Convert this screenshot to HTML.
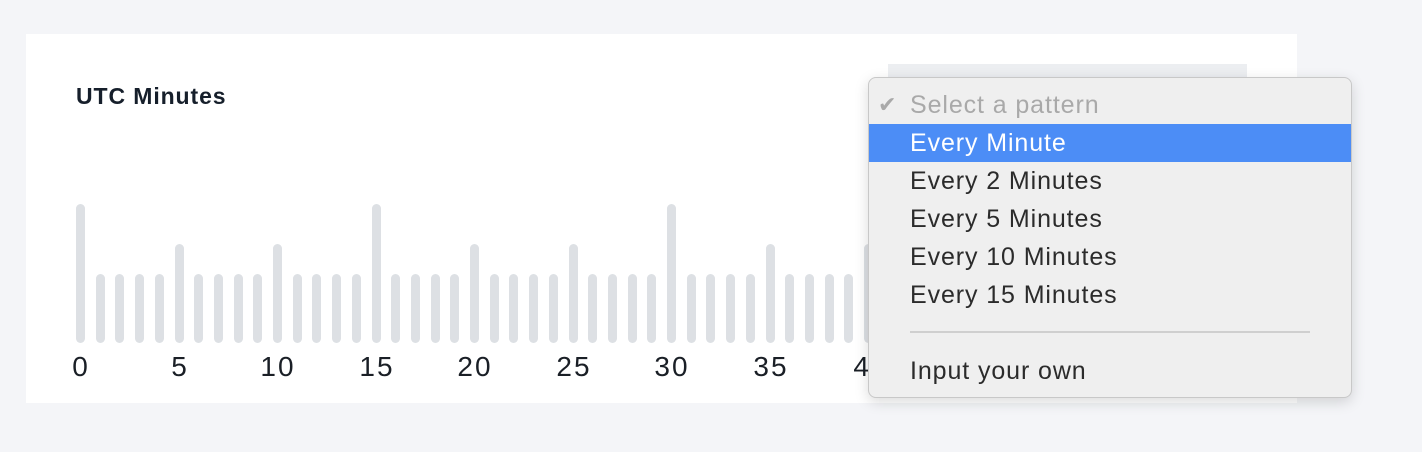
<!DOCTYPE html>
<html><head><meta charset="utf-8"><style>
*{margin:0;padding:0;box-sizing:border-box}
body{width:1422px;height:452px;background:#f4f5f8;position:relative;overflow:hidden;font-family:"Liberation Sans",sans-serif}
.card{position:absolute;left:26px;top:34px;width:1271px;height:369px;background:#fff}
.t{position:absolute;left:76px;top:83px;font-size:23px;font-weight:bold;color:#161f2b;letter-spacing:0.9px}
.b{position:absolute;width:9px;bottom:109px;background:#dde0e4;border-radius:5px}
.s{top:274px}.m{top:244px}.l{top:204px}
.lb{position:absolute;top:351px;font-size:28px;color:#1a1f26;width:60px;text-align:center;letter-spacing:2px;text-indent:2px}
.sel{position:absolute;left:888px;top:64px;width:359px;height:40px;background:#eceef1}
.dd{position:absolute;left:868px;top:77px;width:484px;height:321px;background:#efefef;border:1px solid #c8c8c8;border-radius:8px;box-shadow:0 4px 14px rgba(0,0,0,.15);font-size:25px;letter-spacing:0.9px;color:#2b2b2b}
.it{position:absolute;left:0;width:482px;height:38px;line-height:38px;padding-left:41px}
.hl{background:#4c8df6;color:#fff}
.dis{color:#a9a9a9}
.hr{position:absolute;left:41px;top:253px;width:400px;height:2px;background:#cfcfcf}
</style></head><body>
<div class="card"></div>
<div class="t">UTC Minutes</div>
<div class="b l" style="left:76px"></div>
<div class="b s" style="left:96px"></div>
<div class="b s" style="left:115px"></div>
<div class="b s" style="left:135px"></div>
<div class="b s" style="left:155px"></div>
<div class="b m" style="left:175px"></div>
<div class="b s" style="left:194px"></div>
<div class="b s" style="left:214px"></div>
<div class="b s" style="left:234px"></div>
<div class="b s" style="left:253px"></div>
<div class="b m" style="left:273px"></div>
<div class="b s" style="left:293px"></div>
<div class="b s" style="left:312px"></div>
<div class="b s" style="left:332px"></div>
<div class="b s" style="left:352px"></div>
<div class="b l" style="left:372px"></div>
<div class="b s" style="left:391px"></div>
<div class="b s" style="left:411px"></div>
<div class="b s" style="left:431px"></div>
<div class="b s" style="left:450px"></div>
<div class="b m" style="left:470px"></div>
<div class="b s" style="left:490px"></div>
<div class="b s" style="left:509px"></div>
<div class="b s" style="left:529px"></div>
<div class="b s" style="left:549px"></div>
<div class="b m" style="left:569px"></div>
<div class="b s" style="left:588px"></div>
<div class="b s" style="left:608px"></div>
<div class="b s" style="left:628px"></div>
<div class="b s" style="left:647px"></div>
<div class="b l" style="left:667px"></div>
<div class="b s" style="left:687px"></div>
<div class="b s" style="left:706px"></div>
<div class="b s" style="left:726px"></div>
<div class="b s" style="left:746px"></div>
<div class="b m" style="left:766px"></div>
<div class="b s" style="left:785px"></div>
<div class="b s" style="left:805px"></div>
<div class="b s" style="left:825px"></div>
<div class="b s" style="left:844px"></div>
<div class="b m" style="left:864px"></div>
<div class="lb" style="left:50px">0</div>
<div class="lb" style="left:149px">5</div>
<div class="lb" style="left:247px">10</div>
<div class="lb" style="left:346px">15</div>
<div class="lb" style="left:444px">20</div>
<div class="lb" style="left:543px">25</div>
<div class="lb" style="left:641px">30</div>
<div class="lb" style="left:740px">35</div>
<div class="lb" style="left:840px">40</div>
<div class="sel"></div>
<div class="dd">
<div class="it dis" style="top:8px"><span style="position:absolute;left:9px;font-size:22px">✔</span>Select a pattern</div>
<div class="it hl" style="top:46px">Every Minute</div>
<div class="it" style="top:84px">Every 2 Minutes</div>
<div class="it" style="top:122px">Every 5 Minutes</div>
<div class="it" style="top:160px">Every 10 Minutes</div>
<div class="it" style="top:198px">Every 15 Minutes</div>
<div class="hr"></div>
<div class="it" style="top:274px">Input your own</div>
</div>
</body></html>
